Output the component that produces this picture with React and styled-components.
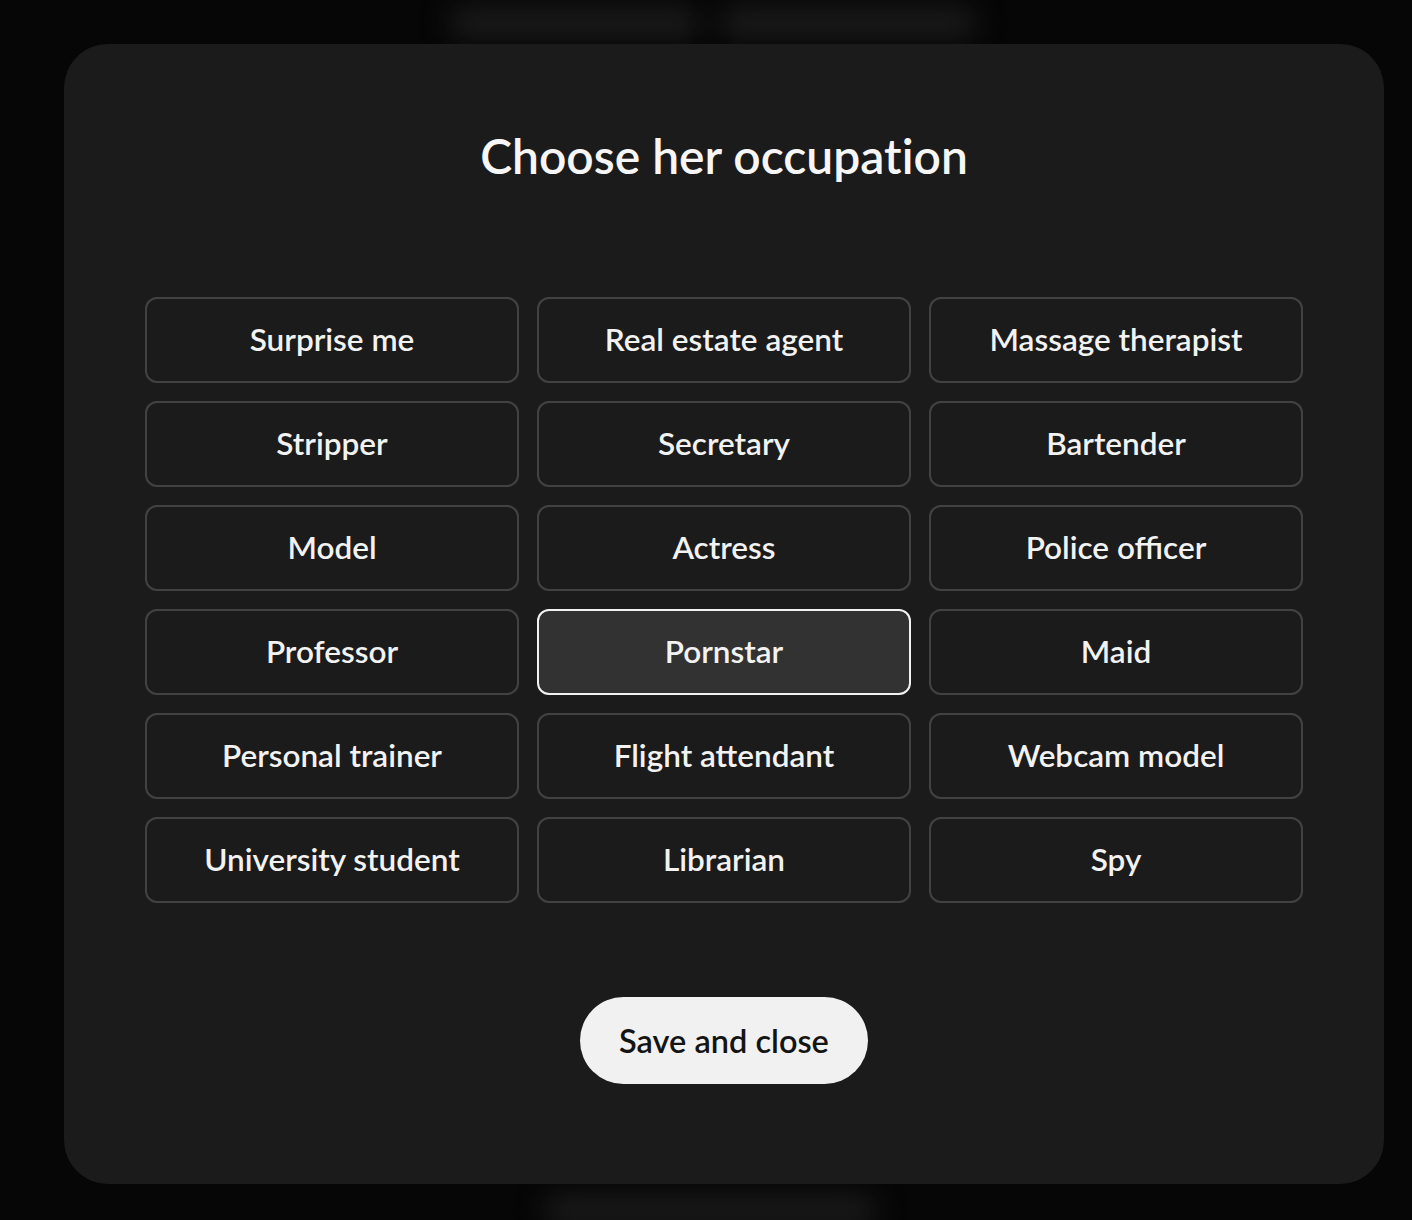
import React, { useState } from 'react';
import styled, { createGlobalStyle } from 'styled-components';

const GlobalStyle = createGlobalStyle`
  html, body {
    margin: 0;
    padding: 0;
    background: #060606;
    font-family: Lato, "Noto Sans", sans-serif;
  }
  * { box-sizing: border-box; }
`;

const Page = styled.div`
  position: relative;
  width: 1412px;
  height: 1220px;
  overflow: hidden;
  padding: 44px 0 0 64px;
`;

const Blur = styled.div`
  position: absolute;
  left: ${({ x }) => x}px;
  top: ${({ y }) => y}px;
  width: ${({ w }) => w}px;
  height: ${({ h }) => h}px;
  background: #1c1c1c;
  border-radius: 12px;
  filter: blur(14px);
`;

const Modal = styled.div`
  position: relative;
  width: 1320px;
  height: 1140px;
  background: #1b1b1b;
  border-radius: 44px;
  padding: 84px 81px 0;
  display: flex;
  flex-direction: column;
  align-items: center;
`;

const Title = styled.h2`
  margin: 0;
  font-size: 48px;
  line-height: 56px;
  font-weight: 600;
  color: #f6f6f6;
  font-variant-ligatures: none;
`;

const Grid = styled.div`
  margin-top: 113px;
  width: 100%;
  display: grid;
  grid-template-columns: repeat(3, 1fr);
  gap: 18px;
`;

const Option = styled.button`
  height: 86px;
  border-radius: 12px;
  border: 2px solid ${({ selected }) => (selected ? '#f2f2f2' : '#424242')};
  background: ${({ selected }) => (selected ? '#323232' : 'transparent')};
  color: #f2f2f2;
  font-family: inherit;
  font-size: 31.5px;
  font-weight: 600;
  cursor: pointer;
  padding: 0 0 2px;
`;

const SaveButton = styled.button`
  margin-top: 94px;
  width: 288px;
  height: 87px;
  border: none;
  border-radius: 44px;
  background: #f1f1f1;
  color: #141414;
  font-family: inherit;
  font-size: 32.5px;
  font-weight: 600;
  cursor: pointer;
`;

const occupations = [
  'Surprise me', 'Real estate agent', 'Massage therapist',
  'Stripper', 'Secretary', 'Bartender',
  'Model', 'Actress', 'Police officer',
  'Professor', 'Pornstar', 'Maid',
  'Personal trainer', 'Flight attendant', 'Webcam model',
  'University student', 'Librarian', 'Spy',
];

export default function App() {
  const [selected, setSelected] = useState('Pornstar');
  return (
    <>
      <GlobalStyle />
      <Page>
        <Blur x={450} y={8} w={250} h={30} />
        <Blur x={720} y={8} w={255} h={30} />
        <Blur x={545} y={1196} w={330} h={30} />
        <Modal>
          <Title>Choose her occupation</Title>
          <Grid>
            {occupations.map((o) => (
              <Option key={o} selected={o === selected} onClick={() => setSelected(o)}>
                {o}
              </Option>
            ))}
          </Grid>
          <SaveButton>Save and close</SaveButton>
        </Modal>
      </Page>
    </>
  );
}
